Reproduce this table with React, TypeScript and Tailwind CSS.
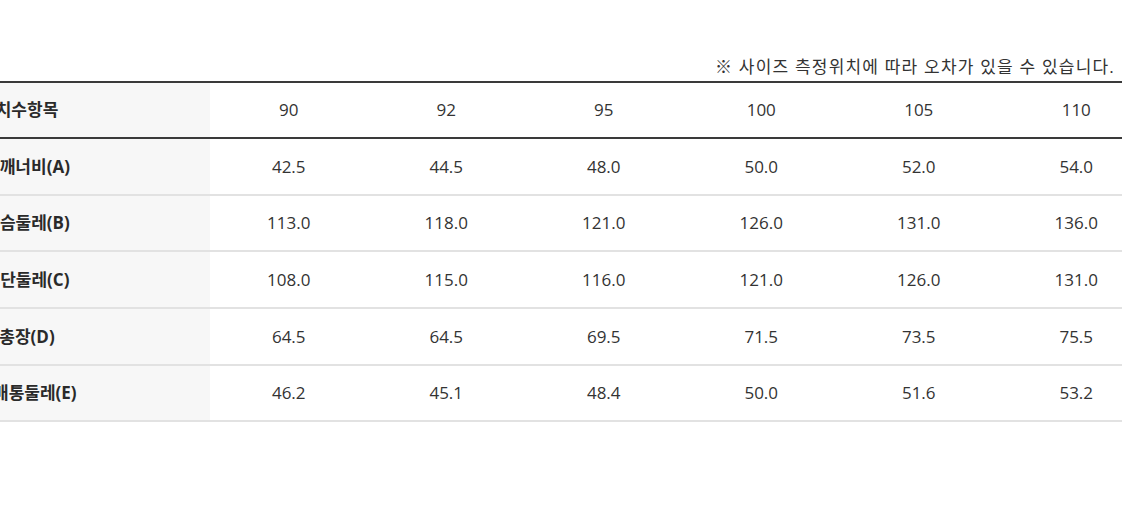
import React from "react";

const sizes = ["90", "92", "95", "100", "105", "110"];
const rows: { label: string; values: string[]; h: string }[] = [
  { label: "어깨너비(A)", values: ["42.5", "44.5", "48.0", "50.0", "52.0", "54.0"], h: "h-[57px]" },
  { label: "가슴둘레(B)", values: ["113.0", "118.0", "121.0", "126.0", "131.0", "136.0"], h: "h-[56px]" },
  { label: "밑단둘레(C)", values: ["108.0", "115.0", "116.0", "121.0", "126.0", "131.0"], h: "h-[57px]" },
  { label: "총장(D)", values: ["64.5", "64.5", "69.5", "71.5", "73.5", "75.5"], h: "h-[57px]" },
  { label: "소매통둘레(E)", values: ["46.2", "45.1", "48.4", "50.0", "51.6", "53.2"], h: "h-[56px]" },
];

function Label({ text }: { text: string }) {
  return (
    <div className="flex h-full items-center bg-[#f7f7f7]">
      <div className="flex w-[54px] justify-center whitespace-nowrap text-[17px] font-bold text-[#2a2a2a]">
        {text}
      </div>
    </div>
  );
}

export default function App() {
  return (
    <div
      className="w-[1125px] h-[523px] overflow-hidden bg-white text-[#333]"
      style={{ fontFamily: '"Open Sans", "Noto Sans CJK KR", sans-serif' }}
    >
      <div className="flex h-[81px] items-end justify-end pr-[10px] pb-[3px]">
        <span className="text-[17px] leading-[22px] tracking-[1.2px] text-[#333]">
          ※ 사이즈 측정위치에 따라 오차가 있을 수 있습니다.
        </span>
      </div>
      <div className="w-[1122px] overflow-hidden">
        <div className="w-[1155px]">
          <div className="grid h-[58px] grid-cols-[210px_repeat(6,157.5px)] border-y-2 border-[#3a3a3a]">
            <Label text="치수항목" />
            {sizes.map((s) => (
              <div key={s} className="flex items-center justify-center text-[17px]">
                {s}
              </div>
            ))}
          </div>
          {rows.map((r) => (
            <div
              key={r.label}
              className={`grid grid-cols-[210px_repeat(6,157.5px)] border-b-2 border-[#e2e2e2] ${r.h}`}
            >
              <Label text={r.label} />
              {r.values.map((v, i) => (
                <div key={i} className="flex items-center justify-center text-[17px]">
                  {v}
                </div>
              ))}
            </div>
          ))}
        </div>
      </div>
    </div>
  );
}
